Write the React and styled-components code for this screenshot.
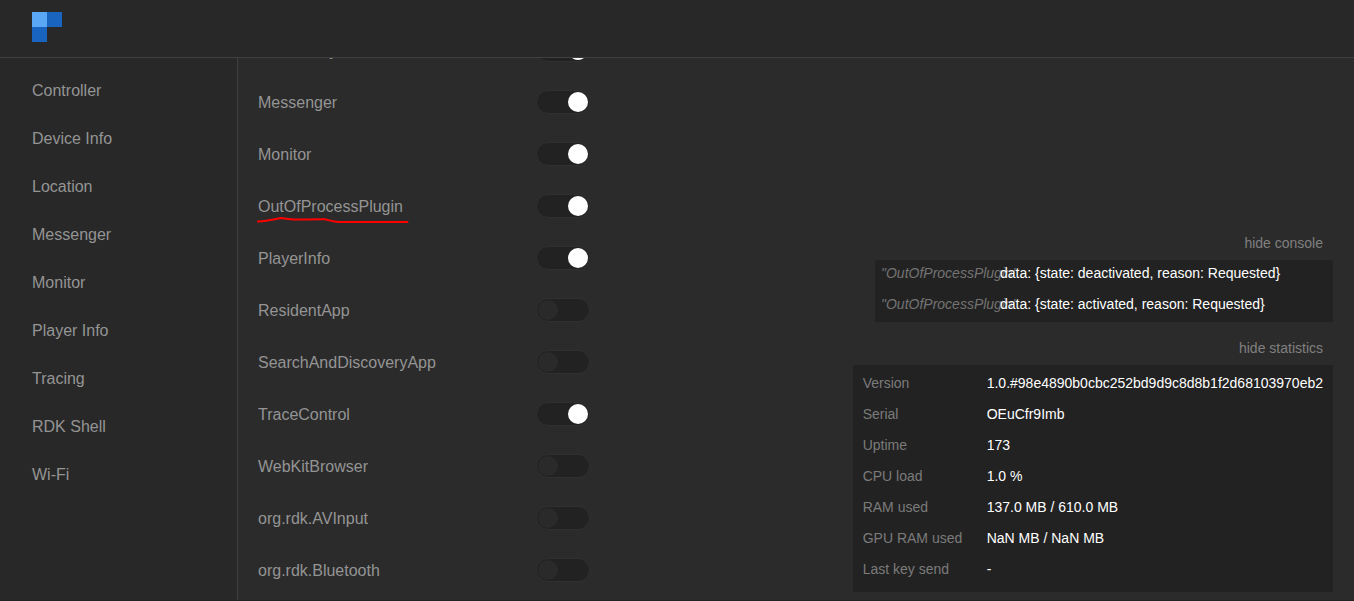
import React from "react";
import styled, { createGlobalStyle } from "styled-components";

const GlobalStyle = createGlobalStyle`
  * { box-sizing: border-box; }
  body {
    margin: 0;
    background: #2b2b2b;
    color: #949494;
    font-family: "Liberation Sans", Arial, sans-serif;
    font-size: 16px;
  }
`;

const Shell = styled.div`
  display: flex;
  flex-direction: column;
  height: 100vh;
  border-bottom: 1px solid #222;
`;

const Header = styled.header`
  flex: none;
  padding: 12px 32px 15px;
  background: #282828;
  border-bottom: 1px solid #404040;
`;

const Logo = styled.svg`
  display: block;
  width: 30px;
  height: 30px;
`;

const Body = styled.div`
  display: flex;
  flex: 1;
  min-height: 0;
`;

const Sidebar = styled.nav`
  flex: none;
  width: 238px;
  padding: 9px 32px;
  background: #282828;
  border-right: 1px solid #404040;
`;

const List = styled.ul`
  margin: 0;
  padding: 0;
  list-style: none;
`;

const NavLink = styled.a`
  display: block;
  line-height: 48px;
  color: #949494;
  text-decoration: none;
`;

const Main = styled.main`
  display: flex;
  flex: 1;
  justify-content: space-between;
  min-width: 0;
  padding: 0 21px 8px 20px;
  overflow: hidden;
`;

/* The list is shown scrolled down: its first visible row is cut by the header. */
const PluginList = styled(List)`
  flex: none;
  margin-top: -34px;
`;

const PluginRow = styled.label`
  display: flex;
  align-items: center;
  height: 52px;
`;

const PluginName = styled.span`
  width: 278px;
  padding-top: 2px;
`;

const Marked = styled.span`
  position: relative;
`;

const Underline = styled.svg`
  position: absolute;
  left: -2px;
  top: 18px;
  width: 154px;
  height: 8px;
`;

const Switch = styled.input`
  appearance: none;
  flex: none;
  width: 54px;
  height: 24px;
  margin: 0;
  padding: 1px;
  background: #222;
  border: 1px solid #303030;
  border-radius: 12px;

  &::before {
    content: "";
    display: block;
    width: 20px;
    height: 20px;
    border-radius: 50%;
    background: #2a2a2a;
  }

  &:checked::before {
    margin-left: auto;
    background: #fff;
  }
`;

const Info = styled.aside`
  display: flex;
  flex-direction: column;
  align-items: flex-end;
  align-self: flex-end;
  font-size: 14px;
  line-height: 26px;
`;

const HideButton = styled.button`
  margin: 13px 0 4px;
  padding: 0 10px;
  border: 0;
  background: none;
  color: #808080;
  font: inherit;
`;

const Console = styled(List)`
  width: 458px;
  padding: 0 6px;
  background: #222;
`;

const Message = styled.li`
  display: flex;
  margin-bottom: 5px;
  color: #fff;
  white-space: nowrap;
`;

const Source = styled.i`
  flex: none;
  width: 119px;
  color: #737373;
`;

const Statistics = styled.dl`
  display: grid;
  grid-template-columns: 120px auto;
  gap: 5px 4px;
  margin: 0;
  padding: 5px 10px 10px;
  background: #222;
`;

const Term = styled.dt`
  color: #7b7b7b;
`;

const Value = styled.dd`
  margin: 0;
  color: #fff;
`;

const pages = [
  "Controller", "Device Info", "Location", "Messenger", "Monitor",
  "Player Info", "Tracing", "RDK Shell", "Wi-Fi",
];

const plugins = [
  { name: "LocationSync", on: true },
  { name: "Messenger", on: true },
  { name: "Monitor", on: true },
  { name: "OutOfProcessPlugin", on: true, marked: true },
  { name: "PlayerInfo", on: true },
  { name: "ResidentApp", on: false },
  { name: "SearchAndDiscoveryApp", on: false },
  { name: "TraceControl", on: true },
  { name: "WebKitBrowser", on: false },
  { name: "org.rdk.AVInput", on: false },
  { name: "org.rdk.Bluetooth", on: false },
];

const messages = [
  "data: {state: deactivated, reason: Requested}",
  "data: {state: activated, reason: Requested}",
];

const statistics = [
  ["Version", "1.0.#98e4890b0cbc252bd9d9c8d8b1f2d68103970eb2"],
  ["Serial", "OEuCfr9Imb"],
  ["Uptime", "173"],
  ["CPU load", "1.0 %"],
  ["RAM used", "137.0 MB / 610.0 MB"],
  ["GPU RAM used", "NaN MB / NaN MB"],
  ["Last key send", "-"],
];

export default function App() {
  return (
    <Shell>
      <GlobalStyle />
      <Header>
        <Logo viewBox="0 0 30 30" shapeRendering="crispEdges" aria-hidden="true">
          <path d="M0 0h15v15H0z" fill="#5aa7f5" />
          <path d="M15 0h15v15H15zM0 15h15v15H0z" fill="#1964be" />
        </Logo>
      </Header>
      <Body>
        <Sidebar>
          <List>
            {pages.map((page) => (
              <li key={page}><NavLink href="#">{page}</NavLink></li>
            ))}
          </List>
        </Sidebar>
        <Main>
          <PluginList>
            {plugins.map(({ name, on, marked }) => (
              <li key={name}>
                <PluginRow>
                  <PluginName>
                    {marked ? (
                      <Marked>
                        {name}
                        <Underline viewBox="0 0 154 8" aria-hidden="true">
                          <path
                            d="M2 5.6C10 5.2 17 3.7 24.7 2.1C29 2.2 32 3.4 38 3.6C48 3.7 59 3 69 3.3C75 4.7 77 5.8 83 6H151.500"
                            fill="none" stroke="#f00" strokeWidth="2" strokeLinecap="round"
                          />
                        </Underline>
                      </Marked>
                    ) : name}
                  </PluginName>
                  <Switch type="checkbox" role="switch" defaultChecked={on} />
                </PluginRow>
              </li>
            ))}
          </PluginList>
          <Info>
            <HideButton type="button">hide console</HideButton>
            <Console>
              {messages.map((message) => (
                <Message key={message}>
                  <Source>"OutOfProcessPlugin"</Source>
                  <span>{message}</span>
                </Message>
              ))}
            </Console>
            <HideButton type="button">hide statistics</HideButton>
            <Statistics>
              {statistics.map(([term, value]) => (
                <React.Fragment key={term}>
                  <Term>{term}</Term>
                  <Value>{value}</Value>
                </React.Fragment>
              ))}
            </Statistics>
          </Info>
        </Main>
      </Body>
    </Shell>
  );
}
